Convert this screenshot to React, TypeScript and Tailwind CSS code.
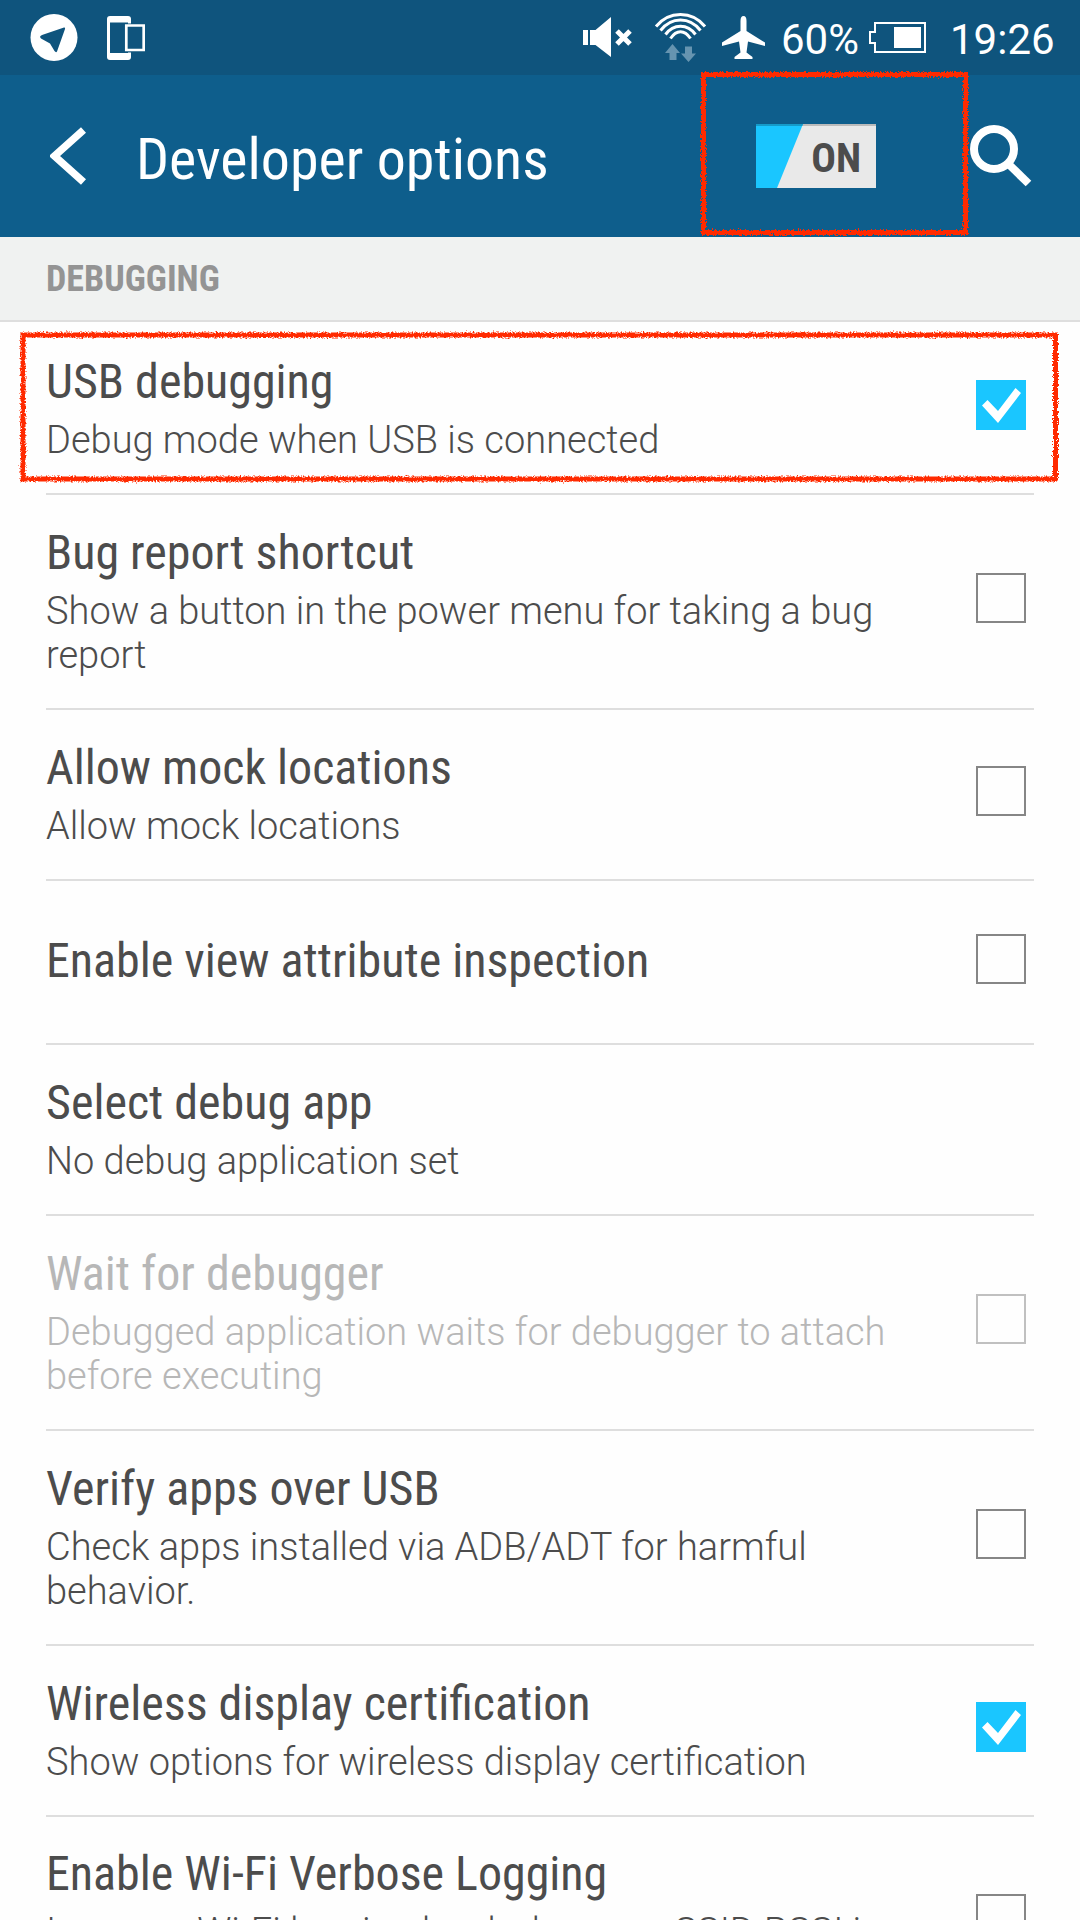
import React from "react";

type Row = {
  title: string;
  summary?: string;
  box?: boolean;
  checked?: boolean;
  disabled?: boolean;
  size: string;
};

const rows: Row[] = [
  { title: "USB debugging", summary: "Debug mode when USB is connected", box: true, checked: true, size: "h-[173px] pt-[2px]" },
  { title: "Bug report shortcut", summary: "Show a button in the power menu for taking a bug report", box: true, size: "h-[215px]" },
  { title: "Allow mock locations", summary: "Allow mock locations", box: true, size: "h-[171px]" },
  { title: "Enable view attribute inspection", box: true, size: "h-[164px]" },
  { title: "Select debug app", summary: "No debug application set", size: "h-[171px]" },
  { title: "Wait for debugger", summary: "Debugged application waits for debugger to attach before executing", box: true, disabled: true, size: "h-[215px]" },
  { title: "Verify apps over USB", summary: "Check apps installed via ADB/ADT for harmful behavior.", box: true, size: "h-[215px]" },
  { title: "Wireless display certification", summary: "Show options for wireless display certification", box: true, checked: true, size: "h-[171px]" },
  { title: "Enable Wi-Fi Verbose Logging", summary: "Increase Wi-Fi logging level, show per SSID RSSI in Wi-Fi Picker", box: true, size: "h-[212px]" },
];

function Checkbox({ checked, disabled }: { checked?: boolean; disabled?: boolean }) {
  if (checked) {
    return (
      <svg className="h-[50px] w-[50px] bg-[#1ac6ff]" viewBox="0 0 50 50">
        <path d="M6 25.5 11.5 20 22 31 39.5 8 45 13 22 43Z" fill="#fff" />
      </svg>
    );
  }
  return <div className={disabled ? "h-[50px] w-[50px] border-2 border-[#c0c0c0]" : "h-[50px] w-[50px] border-2 border-[#868686]"} />;
}

function OptionRow({ row }: { row: Row }) {
  return (
    <div className={`mx-[46px] flex shrink-0 items-center border-b-2 border-[#dedede] ${row.size}`}>
      <div className={`w-[860px] ${row.disabled ? "text-[#b7b7b7]" : "text-[#4c4c4c]"} ${row.summary ? "pb-px" : "pb-0.5"}`}>
        <div className="whitespace-nowrap text-[48px] leading-[56px] [font-stretch:75%]">{row.title}</div>
        {row.summary && <div className="mt-2 text-[38px] font-light leading-[44px]">{row.summary}</div>}
      </div>
      {row.box && (
        <div className="mb-[7px] ml-auto mr-2">
          <Checkbox checked={row.checked} disabled={row.disabled} />
        </div>
      )}
    </div>
  );
}

function StatusBar() {
  return (
    <div className="flex h-[75px] shrink-0 items-center bg-[#0f547d] text-white">
      <svg className="ml-[30px] h-[75px] w-[48px]" viewBox="30 0 48 75">
        <circle cx="54" cy="37.5" r="23.5" fill="#fff" />
        <path d="M40 37Q40 36 42 35L64 27.5Q65.500 27 65 29L57 51.500Q56 53 54.500 51L50 43.500 41 38.500Z" fill="#0f547d" />
      </svg>
      <svg className="ml-[29px] h-[75px] w-[38px]" viewBox="107 0 38 75" fill="none">
        <path d="M110 16h18q3 0 3 3v38q0 3-3 3h-18q-3 0-3-3V19q0-3 3-3Z" fill="#fff" />
        <path d="M110 22.500h18V53h-18Z" fill="#0f547d" />
        <path d="M124 23.500h21.500v29H124Z" fill="#0f547d" />
        <path d="M126.300 25.500h17.400V50h-17.400Z" stroke="#fff" strokeWidth="2.700" />
      </svg>
      <svg className="ml-[438px] h-[75px] w-[49px]" viewBox="583 0 49 75" fill="#fff">
        <path d="M583 30h5v15h-5ZM590 30h5.500L611 17v40L595.500 45H590Z" />
        <path d="M617 31 630 44M630 31 617 44" stroke="#fff" strokeWidth="5" />
      </svg>
      <svg className="ml-[22px] h-[75px] w-[54px]" viewBox="654 0 54 75" fill="none" stroke="#fff" strokeWidth="3">
        <path d="M656 26.500C669 10.500 692 10.500 705 26.500" />
        <path d="M660.500 30.500C671.500 16.500 689.500 16.500 700.500 30.500" />
        <path d="M665.500 34.500C673.500 23.500 687.500 23.500 695.500 34.500" />
        <path d="M670.500 38.500C676.500 29.500 684.500 29.500 690.500 38.500" />
        <path d="M672.500 44 680 53h-3.500v7h-7v-7H665ZM685 46.500h7v7h4L688.500 62l-7.500-8.500h4Z" fill="#6694b0" stroke="none" />
      </svg>
      <svg className="ml-[14px] h-[75px] w-[43px]" viewBox="722 0 43 75" fill="#fff">
        <path d="M743.500 16q3 0 3 5v10L765 42.500V46l-17-4.500-1.500 11 6 4.500v2h-18v-2l6-4.500-1.500-11L722 46v-3.500L740.500 31V21q0-5 3-5Z" />
      </svg>
      <span className="ml-[16px] mt-[3px] w-[79px] whitespace-nowrap text-[42px] leading-[49px]">60%</span>
      <svg className="ml-[8px] h-[75px] w-[58px]" viewBox="868 0 58 75">
        <path d="M875 23h50v29h-50v-9h-5V32h5Z" fill="none" stroke="#fff" strokeWidth="2" />
        <path d="M894 27h27v21h-27Z" fill="#fff" />
      </svg>
      <span className="ml-[24px] mt-[3px] whitespace-nowrap text-[42px] leading-[49px]">19:26</span>
    </div>
  );
}

function AppBar() {
  return (
    <div className="flex h-[162px] shrink-0 items-start bg-[#0e5e8c] text-white">
      <svg className="ml-[50px] h-[162px] w-[37px]" viewBox="50 75 37 162" fill="none">
        <path d="M83.500 130 54.500 156 83.500 182" stroke="#fff" strokeWidth="7.500" />
      </svg>
      <div className="ml-[49px] mt-[50px] whitespace-nowrap text-[58px] leading-[68px] [font-stretch:75%]">Developer options</div>
      <div className="ml-auto mr-[94px] mt-[49px] flex h-[64px] w-[120px] justify-between bg-[#e9e9e9] shadow-[inset_0_2px_0_#bbbbbb]">
        <div className="h-[64px] w-[47px] border-t-2 border-[#159bc9] bg-[#1ac6ff] [clip-path:polygon(0_0,100%_0,21px_100%,0_100%)]" />
        <span className="mr-[15px] mt-[2px] text-[41px] font-bold leading-[64px] text-[#4c4c4c] [font-stretch:75%]">ON</span>
      </div>
      <svg className="mr-[48px] h-[162px] w-[62px]" viewBox="970 75 62 162" fill="none" stroke="#fff">
        <circle cx="994" cy="149" r="20" strokeWidth="8" />
        <path d="M1009 164.500 1028.500 183.500" strokeWidth="8" />
      </svg>
    </div>
  );
}

function Marks() {
  return (
    <svg className="pointer-events-none absolute left-0 top-0 h-[500px] w-[1080px]" viewBox="0 0 1080 500" fill="none" stroke="#ff2a05" strokeWidth="5">
      <filter id="rough" x="-5%" y="-5%" width="110%" height="110%">
        <feTurbulence type="fractalNoise" baseFrequency="0.6" numOctaves="2" seed="4" />
        <feDisplacementMap in="SourceGraphic" scale="5" xChannelSelector="R" yChannelSelector="G" />
      </filter>
      <g filter="url(#rough)">
        <rect x="703.500" y="74.500" width="262" height="158" />
        <rect x="23" y="335" width="1032.500" height="144" />
      </g>
    </svg>
  );
}

export default function App() {
  return (
    <div className="relative flex h-[1920px] w-[1080px] flex-col overflow-hidden bg-[#fefefe] font-[Roboto,sans-serif]">
      <StatusBar />
      <AppBar />
      <div className="flex h-[85px] shrink-0 items-center border-b-2 border-[#dedede] bg-[#f0f2f1] px-[46px] text-[36px] font-bold text-[#949494] [font-stretch:75%]">DEBUGGING</div>
      {rows.map((row) => (
        <OptionRow key={row.title} row={row} />
      ))}
      <Marks />
    </div>
  );
}
